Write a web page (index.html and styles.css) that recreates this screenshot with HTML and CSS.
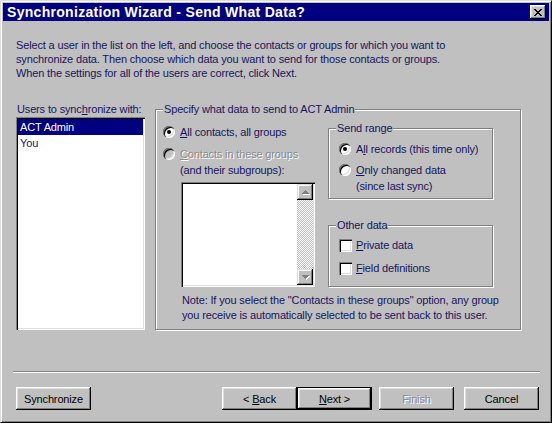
FILE: index.html
```html
<!DOCTYPE html>
<html lang="en">
<head>
    <meta charset="UTF-8">
    <title>Synchronization Wizard - Send What Data?</title>
    <link rel="stylesheet" href="styles.css">
</head>
<body>
<div class="window">
    <div class="titlebar">
        <span class="title">Synchronization Wizard - Send What Data?</span>
        <span class="close">
            <svg width="8" height="7" viewBox="0 0 8 7"><path d="M0 0h2v1h1v1h2V1h1V0h2v1H7v1H6v1H5v1h1v1h1v1h1v1H6V6H5V5H3v1H2v1H0V6h1V5h1V4h1V3H2V2H1V1H0z" fill="#000"/></svg>
        </span>
    </div>

    <div class="content">
        <p class="intro">Select a user in the list on the left, and choose the contacts or groups for which you want to<br>
            synchronize data. Then choose which data you want to send for those contacts or groups.<br>
            When the settings for all of the users are correct, click Next.</p>

        <div class="main">
            <div class="users">
                <span class="users-label">Users to sync<u>h</u>ronize with:</span>
                <ul class="listbox users-list">
                    <li class="selected">ACT Admin</li>
                    <li>You</li>
                </ul>
            </div>

            <fieldset class="group specify">
                <legend>Specify what data to send to ACT Admin</legend>
                <div class="specify-body">
                    <div class="col-left">
                        <div class="option">
                            <span class="radio checked"></span>
                            <span><u>A</u>ll contacts, all groups</span>
                        </div>
                        <div class="option">
                            <span class="radio disabled"></span>
                            <span><span class="dim"><u>C</u>ontacts in these groups</span><br>(and their subgroups):</span>
                        </div>
                        <div class="listbox groups-list">
                            <div class="scrollbar">
                                <span class="arrow"><svg width="7" height="4" viewBox="0 0 7 4"><path d="M3 0h1v1h1v1h1v1h1v1H0V3h1V2h1V1h1z" fill="#808080"/></svg></span>
                                <span class="arrow"><svg width="7" height="4" viewBox="0 0 7 4"><path d="M0 0h7v1H6v1H5v1H4v1H3V3H2V2H1V1H0z" fill="#808080"/></svg></span>
                            </div>
                        </div>
                    </div>

                    <div class="col-right">
                        <fieldset class="group range">
                            <legend>Send range</legend>
                            <div class="option">
                                <span class="radio checked"></span>
                                <span>A<u>l</u>l records (this time only)</span>
                            </div>
                            <div class="option">
                                <span class="radio"></span>
                                <span><u>O</u>nly changed data<br>(since last sync)</span>
                            </div>
                        </fieldset>

                        <fieldset class="group other">
                            <legend>Other data</legend>
                            <div class="option">
                                <span class="check"></span>
                                <span><u>P</u>rivate data</span>
                            </div>
                            <div class="option">
                                <span class="check"></span>
                                <span><u>F</u>ield definitions</span>
                            </div>
                        </fieldset>
                    </div>
                </div>
                <p class="note">Note: If you select the "Contacts in these groups" option, any group<br>
                    you receive is automatically selected to be sent back to this user.</p>
            </fieldset>
        </div>
    </div>

    <div class="separator"></div>

    <div class="buttons">
        <button class="btn">Synchronize</button>
        <span class="spacer"></span>
        <button class="btn">&lt; <u>B</u>ack</button>
        <button class="btn default"><u>N</u>ext &gt;</button>
        <button class="btn disabled finish">Finish</button>
        <button class="btn cancel">Cancel</button>
    </div>
</div>
</body>
</html>
```

FILE: styles.css
```css
body {
    margin: 0;
    font-family: "Liberation Sans", Arial, sans-serif;
    font-size: 11px;
    letter-spacing: -0.15px;
    color: #16165e;
}

.window {
    width: 552px;
    height: 423px;
    box-sizing: border-box;
    background: #c0c0c0;
    border: 1px solid;
    border-color: #dfdfdf #000 #000 #dfdfdf;
    box-shadow: inset 1px 1px #fff, inset -1px -1px #808080;
    padding: 2px;
    display: flex;
    flex-direction: column;
}

.titlebar {
    height: 18px;
    background: #000080;
    color: #fff;
    display: flex;
    align-items: center;
    justify-content: space-between;
    padding-left: 4px;
}

.title {
    font-weight: bold;
    font-size: 14px;
    letter-spacing: 0.3px;
}

.close {
    width: 16px;
    height: 14px;
    margin-right: 3px;
    background: #c0c0c0;
    box-shadow: inset -1px -1px #000, inset 1px 1px #fff, inset -2px -2px #808080, inset 2px 2px #dfdfdf;
    display: flex;
    align-items: center;
    justify-content: center;
}

.content {
    flex: 1;
    padding: 17px 0 0 13px;
}

.intro {
    margin: 0;
    line-height: 14px;
}

.main {
    display: flex;
    align-items: flex-start;
    margin-top: 22px;
}

.users {
    width: 129px;
    margin-right: 10px;
}

.users-label {
    display: block;
    line-height: 14px;
    padding-left: 1px;
    white-space: nowrap;
}

.listbox {
    background: #fff;
    box-sizing: border-box;
    padding: 2px;
    box-shadow: inset 1px 1px #808080, inset 2px 2px #000, inset -1px -1px #fff, inset -2px -2px #dfdfdf;
}

.users-list {
    height: 213px;
    margin: 1px 0 0;
    list-style: none;
}

.users-list li {
    line-height: 16px;
    padding-left: 2px;
}

.users-list li.selected {
    background: #000080;
    color: #fff;
}

/* group boxes */
fieldset.group {
    margin: 0;
    min-width: 0;
    border: 1px solid #808080;
    box-shadow: inset 1px 1px #fff, 1px 1px #fff;
}

fieldset.group legend {
    padding: 0 1px;
    line-height: 14px;
    background: #c0c0c0;
}

fieldset.specify {
    width: 366px;
    height: 228px;
    box-sizing: border-box;
    padding: 5px 7px 0;
}

.specify-body {
    display: flex;
}

.col-left {
    width: 152px;
    padding-top: 3px;
}

.col-right {
    width: 165px;
    margin-left: 13px;
}

.option {
    display: flex;
    align-items: flex-start;
    line-height: 16px;
}

.option + .option {
    margin-top: 6px;
}

.radio {
    flex: none;
    width: 12px;
    height: 12px;
    margin: 2px 5px 0 0;
    border-radius: 50%;
    background: #fff;
    box-shadow: inset 1px 1px #808080, inset 2px 2px #000, inset -1px -1px #fff, inset -2px -2px #dfdfdf;
    display: flex;
    align-items: center;
    justify-content: center;
}

.radio.checked::after {
    content: "";
    width: 4px;
    height: 4px;
    border-radius: 50%;
    background: #000;
}

.radio.disabled {
    background: #c0c0c0;
}

.check {
    flex: none;
    width: 13px;
    height: 13px;
    margin: 2px 4px 0 0;
    background: #fff;
    box-shadow: inset 1px 1px #808080, inset 2px 2px #000, inset -1px -1px #fff, inset -2px -2px #dfdfdf;
}

.dim {
    color: #8c8c8c;
    text-shadow: 1px 1px #fff;
}

.groups-list {
    width: 134px;
    height: 105px;
    margin: 4px 0 0 18px;
    display: flex;
    justify-content: flex-end;
}

.scrollbar {
    width: 16px;
    display: flex;
    flex-direction: column;
    justify-content: space-between;
    background-image: conic-gradient(#fff 25%, #c0c0c0 0 50%, #fff 0 75%, #c0c0c0 0);
    background-size: 2px 2px;
}

.arrow {
    width: 16px;
    height: 16px;
    background: #c0c0c0;
    box-shadow: inset -1px -1px #000, inset 1px 1px #dfdfdf, inset -2px -2px #808080, inset 2px 2px #fff;
    display: flex;
    align-items: center;
    justify-content: center;
}

.arrow svg {
    filter: drop-shadow(1px 1px 0 #fff);
}

fieldset.range {
    padding: 6px 9px 4px 7px;
}

fieldset.other {
    margin-top: 19px;
    padding: 5px 9px 10px 7px;
}

.range .option,
.other .option {
    margin-left: 3px;
}

.range .option + .option {
    margin-top: 5px;
}

.other .option + .option {
    margin-top: 7px;
}

.note {
    margin: 6px 0 0 19px;
    line-height: 15px;
}

.separator {
    border-top: 1px solid #808080;
    border-bottom: 1px solid #fff;
    margin: 0 9px 14px 10px;
}

.buttons {
    display: flex;
    padding: 0 10px 10px 13px;
}

.spacer {
    flex: 1;
}

.btn {
    width: 75px;
    height: 23px;
    padding: 0;
    border: none;
    background: #c0c0c0;
    font-family: "Liberation Sans", Arial, sans-serif;
    font-size: 11px;
    letter-spacing: -0.15px;
    color: #000;
    box-shadow: inset -1px -1px #000, inset 1px 1px #fff, inset -2px -2px #808080, inset 2px 2px #dfdfdf;
}

.btn.default {
    border: 1px solid #000;
}

.btn.disabled {
    color: #8c8c8c;
    text-shadow: 1px 1px #fff;
}

.finish {
    margin-left: 7px;
}

.cancel {
    margin-left: 10px;
}
```
